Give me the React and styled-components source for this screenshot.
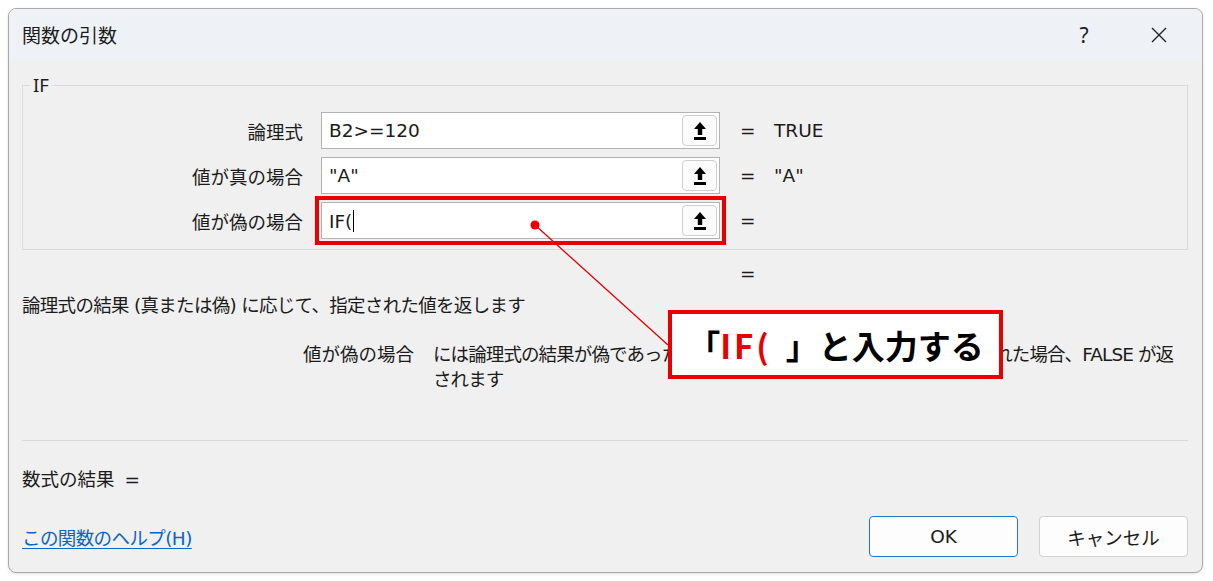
import React from 'react';
import styled, { createGlobalStyle } from 'styled-components';

const GlobalStyle = createGlobalStyle`
  body {
    margin: 0;
    background: #ffffff;
    font-family: 'DejaVu Sans', 'Noto Sans CJK JP', sans-serif;
    color: #1b1b1b;
  }
`;

const Dialog = styled.div`
  position: relative;
  box-sizing: border-box;
  margin: 8px;
  width: 1195px;
  height: 565px;
  border: 1px solid #a9a9a9;
  border-radius: 8px;
  background: #f0f0f0;
  overflow: hidden;
  display: flex;
  flex-direction: column;
  box-shadow: 0 1px 3px rgba(0, 0, 0, 0.12);
  font-size: 18.5px;
`;

const TitleBar = styled.div`
  height: 51px;
  flex-shrink: 0;
  display: flex;
  align-items: center;
  padding-left: 13px;
  background: #eef2f7;
`;

const Title = styled.div`
  flex: 1;
  font-size: 19px;
  font-family: 'Noto Sans CJK JP', sans-serif;
`;

const TitleButton = styled.div`
  width: 46px;
  height: 40px;
  display: flex;
  align-items: center;
  justify-content: center;
  margin-right: ${(p) => p.$gap}px;
  font-family: 'Noto Sans', sans-serif;
  font-size: 21px;
  color: #222;
`;

const Body = styled.div`
  flex: 1;
  display: flex;
  flex-direction: column;
  padding: 0 14px 15px 13px;
`;

const GroupBox = styled.fieldset`
  margin: 14px 0 0;
  padding: 0 0 10px;
  min-width: 0;
  border: 1px solid #dadada;
`;

const Legend = styled.legend`
  margin-left: 7px;
  padding: 0 3px;
  line-height: 22px;
  font-family: 'Noto Sans', sans-serif;
`;

const Rows = styled.div`
  display: flex;
  flex-direction: column;
  gap: 8px;
  padding-top: 16px;
`;

const Row = styled.div`
  display: flex;
  align-items: center;
  height: 37px;
`;

const Label = styled.div`
  width: 280px;
  margin-right: 18px;
  text-align: right;
`;

const InputBox = styled.div`
  box-sizing: border-box;
  width: 399px;
  height: 37px;
  display: flex;
  align-items: center;
  padding: 0 2px 0 7px;
  background: #ffffff;
  border: 1px solid #b3b3b3;
  outline: ${(p) => (p.$highlight ? '4px solid #e60000' : 'none')};
  outline-offset: 2px;
`;

const InputText = styled.div`
  flex: 1;
  white-space: nowrap;
`;

const Caret = styled.span`
  display: inline-block;
  width: 0;
  height: 22px;
  margin-left: 1px;
  vertical-align: -4px;
  border-left: 1.5px solid #000;
`;

const RefButton = styled.div`
  box-sizing: border-box;
  width: 35px;
  height: 31px;
  display: flex;
  align-items: center;
  justify-content: center;
  border: 1px solid #cfcfcf;
  border-radius: 4px;
  background: #fbfbfb;
`;

const Eq = styled.div`
  width: 34px;
  margin-left: 20px;
`;

const Value = styled.div``;

const ResultEq = styled.div`
  margin-top: 13px;
  padding-left: 718px;
  line-height: 22px;
`;

const Description = styled.div`
  margin-top: 10px;
  line-height: 22px;
  letter-spacing: -0.7px;
`;

const ArgHelp = styled.div`
  display: flex;
  margin-top: 25px;
  padding-left: 281px;
  line-height: 25px;
`;

const ArgName = styled.div`
  flex-shrink: 0;
  margin-right: 19px;
`;

const ArgText = styled.div`
  flex: 1;
  letter-spacing: -0.9px;
`;

const Divider = styled.div`
  height: 1px;
  margin-top: 48px;
  background: #dadada;
`;

const FormulaResult = styled.div`
  margin-top: 28px;
  line-height: 22px;
  word-spacing: 4px;
`;

const Footer = styled.div`
  margin-top: auto;
  display: flex;
  align-items: center;
`;

const HelpLinkWrap = styled.div`
  flex: 1;
`;

const HelpLink = styled.a`
  color: #0a66c2;
  text-decoration: underline;
  text-underline-offset: 3px;
  letter-spacing: -0.6px;
  cursor: pointer;
`;

const Button = styled.button`
  box-sizing: border-box;
  width: 149px;
  height: 41px;
  margin-left: ${(p) => (p.$first ? 0 : 21)}px;
  border: 1px solid ${(p) => (p.$primary ? '#2f72c4' : '#d0d0d0')};
  border-radius: 4px;
  background: #fdfdfd;
  font: inherit;
  font-size: 18.5px;
  color: #1b1b1b;
`;

const Leader = styled.svg`
  position: absolute;
  inset: 0;
  pointer-events: none;
`;

const Callout = styled.div`
  position: absolute;
  left: 659px;
  top: 301px;
  box-sizing: border-box;
  width: 335px;
  height: 69px;
  display: flex;
  align-items: center;
  justify-content: center;
  border: 4px solid #e60000;
  background: #ffffff;
  font-family: 'Noto Sans CJK JP', sans-serif;
  font-weight: 700;
  font-size: 33px;
  color: #000;
  white-space: nowrap;
`;

const Red = styled.span`
  color: #e60000;
  letter-spacing: 3px;
  margin-right: 14px;
`;

const RefIcon = () => (
  <svg width="14" height="20" viewBox="0 0 14 20">
    <polygon points="7,1 1,8 13,8" fill="#000" />
    <rect x="4.8" y="7.5" width="4.4" height="6.5" fill="#000" />
    <rect x="1" y="16" width="12" height="3" fill="#000" />
  </svg>
);

const CloseIcon = () => (
  <svg width="18" height="18" viewBox="0 0 18 18">
    <path d="M2 2 L16 16 M16 2 L2 16" stroke="#222" strokeWidth="1.4" fill="none" />
  </svg>
);

const args = [
  { label: '論理式', value: 'B2>=120', result: 'TRUE' },
  { label: '値が真の場合', value: '"A"', result: '"A"' },
  { label: '値が偽の場合', value: 'IF(', result: '', active: true },
];

export default function App() {
  return (
    <>
      <GlobalStyle />
      <Dialog>
        <TitleBar>
          <Title>関数の引数</Title>
          <TitleButton $gap={29}>?</TitleButton>
          <TitleButton $gap={20}>
            <CloseIcon />
          </TitleButton>
        </TitleBar>
        <Body>
          <GroupBox>
            <Legend>IF</Legend>
            <Rows>
              {args.map((a) => (
                <Row key={a.label}>
                  <Label>{a.label}</Label>
                  <InputBox $highlight={a.active}>
                    <InputText>
                      {a.value}
                      {a.active && <Caret />}
                    </InputText>
                    <RefButton>
                      <RefIcon />
                    </RefButton>
                  </InputBox>
                  <Eq>=</Eq>
                  <Value>{a.result}</Value>
                </Row>
              ))}
            </Rows>
          </GroupBox>
          <ResultEq>=</ResultEq>
          <Description>論理式の結果 (真または偽) に応じて、指定された値を返します</Description>
          <ArgHelp>
            <ArgName>値が偽の場合</ArgName>
            <ArgText>
              には論理式の結果が偽であった場合に返される値を指定します。省略された場合、FALSE が返されます
            </ArgText>
          </ArgHelp>
          <Divider />
          <FormulaResult>数式の結果 =</FormulaResult>
          <Footer>
            <HelpLinkWrap>
              <HelpLink>この関数のヘルプ(H)</HelpLink>
            </HelpLinkWrap>
            <Button $primary $first>OK</Button>
            <Button>キャンセル</Button>
          </Footer>
        </Body>
        <Leader width="1193" height="563">
          <line x1="526" y1="216" x2="659" y2="336" stroke="#e60000" strokeWidth="1.3" />
          <circle cx="526" cy="216" r="4.5" fill="#e60000" />
        </Leader>
        <Callout>
          「<Red>IF(</Red>」と入力する
        </Callout>
      </Dialog>
    </>
  );
}
